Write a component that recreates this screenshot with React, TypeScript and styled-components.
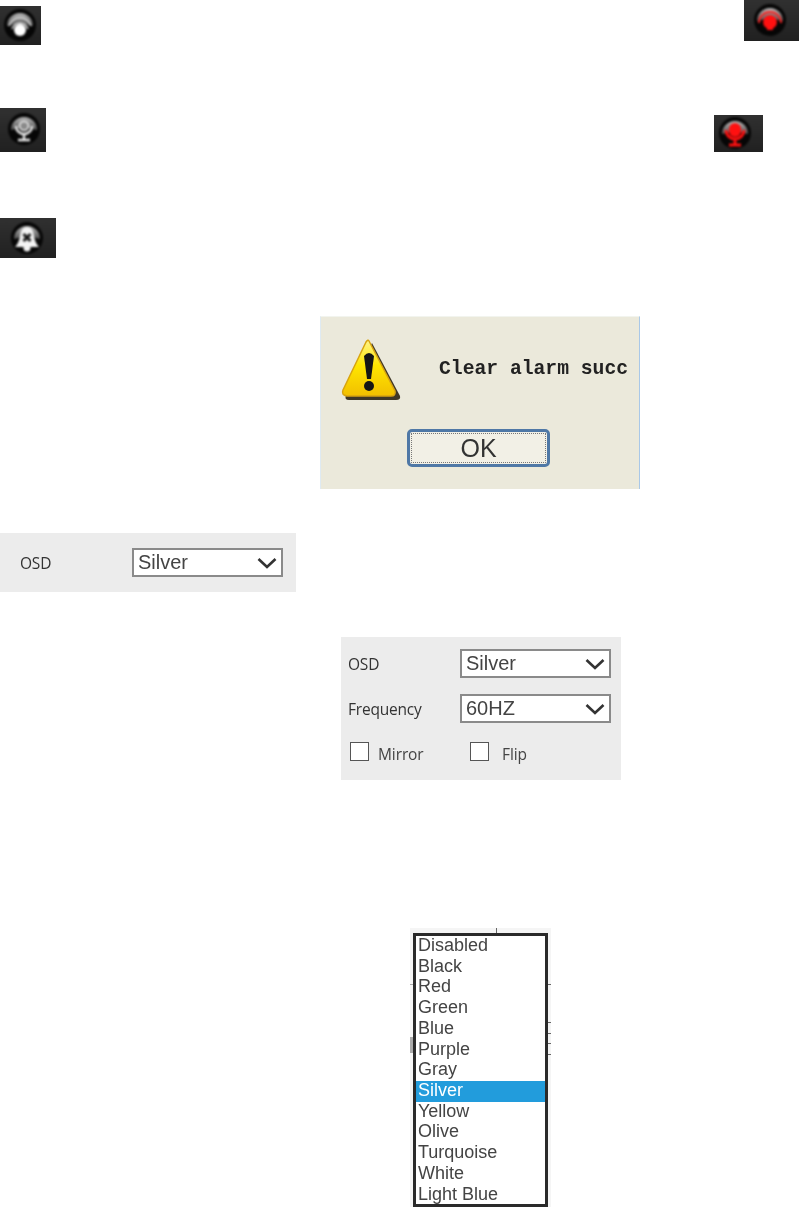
import React from 'react';
import styled, {createGlobalStyle} from 'styled-components';

const GlobalStyle = createGlobalStyle`
  html, body {
    margin: 0;
    padding: 0;
    background: #fff;
  }
`;

const Page = styled.div`
  width: 799px;
  height: 1207px;
  overflow: hidden;
  display: flex;
  flex-direction: column;
  background: #fff;
`;

const IconRow = styled.div<{$top: number; $height: number; $inset?: number}>`
  display: flex;
  justify-content: space-between;
  align-items: flex-start;
  flex-shrink: 0;
  height: ${p => p.$height}px;
  margin-top: ${p => p.$top}px;
  padding-right: ${p => p.$inset || 0}px;
`;

const IconClip = styled.div<{$top?: number}>`
  margin-top: ${p => p.$top || 0}px;
  overflow: hidden;
  line-height: 0;
`;

const IconSvg = styled.svg`
  display: block;
  overflow: visible;
  filter: blur(0.8px);
`;

const Dialog = styled.div`
  box-sizing: border-box;
  flex-shrink: 0;
  width: 320px;
  height: 173px;
  margin: 58px 0 0 320px;
  padding: 22px 0 0 20px;
  background: #ebe9db;
  border-top: 1px solid #f2f4ee;
  border-right: 1px solid #a9c8e8;
  border-left: 1px solid #dfeaf2;
  filter: blur(0.5px);
`;

const DialogBody = styled.div`
  display: flex;
  align-items: flex-start;
`;

const DialogText = styled.div`
  margin: 18px 0 0 38px;
  font-family: 'Liberation Mono', monospace;
  font-size: 19.7px;
  font-weight: 700;
  line-height: 24px;
  color: #222;
  white-space: nowrap;
`;

const OkButton = styled.div`
  box-sizing: border-box;
  width: 143px;
  height: 38px;
  margin: 26px 0 0 66px;
  padding-top: 1px;
  display: flex;
  align-items: center;
  justify-content: center;
  border: 3px solid #4f78a6;
  border-radius: 5px;
  outline: 1px dotted #777;
  outline-offset: -5px;
  background: #f2f0e6;
  font-family: 'Liberation Sans', sans-serif;
  font-size: 25px;
  color: #333;
`;

const SinglePanel = styled.div`
  box-sizing: border-box;
  flex-shrink: 0;
  width: 296px;
  height: 59px;
  margin-top: 44px;
  padding: 15px 0 0 20px;
  display: flex;
  align-items: flex-start;
  background: #ececec;
  filter: blur(0.5px);
`;

const SettingsPanel = styled.div`
  box-sizing: border-box;
  flex-shrink: 0;
  width: 280px;
  height: 143px;
  margin: 45px 0 0 341px;
  padding: 12px 0 0 7px;
  display: flex;
  flex-direction: column;
  gap: 16px;
  background: #ececec;
  filter: blur(0.5px);
`;

const FieldRow = styled.div`
  display: flex;
  align-items: flex-start;
`;

const FieldLabel = styled.div<{$width: number}>`
  width: ${p => p.$width}px;
  font-family: 'Open Sans', sans-serif;
  font-size: 15.5px;
  letter-spacing: -0.2px;
  line-height: 31px;
  height: 29px;
  color: #333;
`;

const Select = styled.div`
  box-sizing: border-box;
  width: 151px;
  height: 29px;
  padding: 0 4px 0 4px;
  display: flex;
  align-items: center;
  justify-content: space-between;
  background: #fff;
  border: 2px solid #8a8a8a;
  font-family: 'Liberation Sans', sans-serif;
  font-size: 20px;
  color: #444;
`;

const CheckRow = styled.div`
  display: flex;
  align-items: flex-start;
  margin: 3px 0 0 2px;
`;

const CheckBox = styled.span<{$gap: number}>`
  box-sizing: border-box;
  width: 19px;
  height: 19px;
  margin-right: ${p => p.$gap}px;
  background: #fff;
  border: 1px solid #555;
`;

const CheckLabel = styled.span<{$width: number}>`
  width: ${p => p.$width}px;
  margin-top: 3px;
  font-family: 'Open Sans', sans-serif;
  font-size: 15.5px;
  line-height: 19px;
  letter-spacing: -0.1px;
  color: #444;
`;

const ListShot = styled.div`
  position: relative;
  box-sizing: border-box;
  flex-shrink: 0;
  width: 141px;
  height: 279px;
  margin: 148px 0 0 410px;
  padding: 5px 3px 0;
  background: #f5f5f5;
  filter: blur(0.4px);
`;

const Tick = styled.span<{$x: number; $y: number; $w: number; $h: number; $light?: boolean}>`
  position: absolute;
  left: ${p => p.$x}px;
  top: ${p => p.$y}px;
  width: ${p => p.$w}px;
  height: ${p => p.$h}px;
  background: ${p => (p.$light ? '#aaa' : '#666')};
`;

const ColorList = styled.ul`
  box-sizing: border-box;
  width: 135px;
  height: 274px;
  margin: 0;
  padding: 0;
  overflow: hidden;
  list-style: none;
  background: #fff;
  border: 3px solid #2a2a2a;
`;

const ColorItem = styled.li<{$active?: boolean}>`
  height: 20.72px;
  padding-left: 2px;
  font-family: 'Liberation Sans', sans-serif;
  font-size: 18px;
  line-height: 19px;
  color: ${p => (p.$active ? '#fff' : '#444')};
  background: ${p => (p.$active ? '#229cdc' : 'transparent')};
`;

const colors = [
  'Disabled',
  'Black',
  'Red',
  'Green',
  'Blue',
  'Purple',
  'Gray',
  'Silver',
  'Yellow',
  'Olive',
  'Turquoise',
  'White',
  'Light Blue',
];

type BadgeProps = {
  id: string;
  w: number;
  h: number;
  cx: number;
  cy: number;
  top?: number;
  children: React.ReactNode;
};

// dark square button with the round black knob and a grey dome on top
const Badge = ({id, w, h, cx, cy, top, children}: BadgeProps) => (
  <IconClip $top={top}>
    <IconSvg width={w} height={h} viewBox={`0 0 ${w} ${h}`}>
      <defs>
        <linearGradient id={`${id}-bg`} x1="0" y1="0" x2="0" y2="1">
          <stop offset="0" stopColor="#333" />
          <stop offset="1" stopColor="#1e1e1e" />
        </linearGradient>
        <linearGradient id={`${id}-dome`} x1="0" y1="0" x2="0" y2="1">
          <stop offset="0" stopColor="#b8b8b8" />
          <stop offset="1" stopColor="#505050" />
        </linearGradient>
      </defs>
      <rect x="-6" y="-6" width={w + 12} height={h + 12} fill={`url(#${id}-bg)`} />
      <circle cx={cx} cy={cy} r={16} fill="#060606" />
      <path
        d={`M${cx - 13} ${cy + 1}A13 13 0 0 1 ${cx + 13} ${cy + 1}Q${cx} ${cy - 3} ${cx - 13} ${cy + 1}Z`}
        fill={`url(#${id}-dome)`}
      />
      {children}
    </IconSvg>
  </IconClip>
);

const Chevron = () => (
  <svg width="20" height="12" viewBox="0 0 20 12">
    <path d="M1.5 2L10 10L18.5 2" fill="none" stroke="#333" strokeWidth="2.6" />
  </svg>
);

const WarningIcon = () => (
  <svg width="60" height="64" viewBox="0 0 60 64">
    <defs>
      <linearGradient id="warn" x1="0" y1="0" x2="0" y2="1">
        <stop offset="0" stopColor="#fff48a" />
        <stop offset="0.45" stopColor="#ffe600" />
        <stop offset="1" stopColor="#f2bf00" />
      </linearGradient>
    </defs>
    <path d="M31 4L59 57Q60 61 55 61H8Q3 61 5 56Z" fill="#3e3626" />
    <path d="M28 2L54 52Q55 57 50 57H6Q0 56 2 51L25 3Q27 0 28 2Z" fill="url(#warn)" stroke="#d8a410" strokeWidth="1.5" />
    <path d="M23 17Q28 11 33 17L30 40H26Z" fill="#151515" />
    <circle cx="28" cy="47" r="5" fill="#151515" />
  </svg>
);

const App = () => (
  <Page>
    <GlobalStyle />
    <IconRow $top={0} $height={45}>
      <Badge id="a" w={41} h={39} cx={20} cy={19} top={6}>
        <path d="M9 20A11.5 11.5 0 0 1 31 20" fill="none" stroke="#d8d8d8" strokeWidth="1.5" />
        <path d="M12 23A8.5 8.5 0 0 1 28 23" fill="none" stroke="#e4e4e4" strokeWidth="1.5" />
        <circle cx="20" cy="24" r="6" fill="#fff" />
      </Badge>
      <Badge id="b" w={55} h={41} cx={26} cy={20}>
        <path d="M15 23A11 11 0 0 1 37 23" fill="none" stroke="#ff2020" strokeWidth="1.8" />
        <circle cx="26" cy="22" r="7" fill="#ff1010" />
        <rect x="23" y="27" width="6" height="3" fill="#ff1010" />
      </Badge>
    </IconRow>
    <IconRow $top={63} $height={44} $inset={36}>
      <Badge id="c" w={46} h={44} cx={24} cy={21}>
        <circle cx="24" cy="18" r="4.5" fill="#8a8a8a" stroke="#efefef" strokeWidth="1.6" />
        <path d="M16 18A8 8 0 0 0 32 18M24 26V31M18 32H30" fill="none" stroke="#ececec" strokeWidth="2.4" />
      </Badge>
      <Badge id="d" w={49} h={37} cx={21} cy={18} top={7}>
        <rect x="15" y="8" width="12" height="14" rx="6" fill="#ff1010" />
        <path d="M12 15A9 9 0 0 0 30 15M21 24V29M15 30H27" fill="none" stroke="#ff1010" strokeWidth="3" />
      </Badge>
    </IconRow>
    <IconRow $top={66} $height={40}>
      <Badge id="e" w={56} h={40} cx={27} cy={20}>
        <path d="M27 9Q33 9 34 18Q35 25 39 29H15Q19 25 20 18Q21 9 27 9Z" fill="#f4f4f4" />
        <circle cx="27" cy="30" r="3.5" fill="#f4f4f4" />
        <path d="M23.5 16L30.5 23M30.5 16L23.5 23" stroke="#151515" strokeWidth="3" />
      </Badge>
    </IconRow>
    <Dialog>
      <DialogBody>
        <WarningIcon />
        <DialogText>Clear alarm succ</DialogText>
      </DialogBody>
      <OkButton>OK</OkButton>
    </Dialog>
    <SinglePanel>
      <FieldLabel $width={112}>OSD</FieldLabel>
      <Select>
        Silver
        <Chevron />
      </Select>
    </SinglePanel>
    <SettingsPanel>
      <FieldRow>
        <FieldLabel $width={112}>OSD</FieldLabel>
        <Select>
          Silver
          <Chevron />
        </Select>
      </FieldRow>
      <FieldRow>
        <FieldLabel $width={112}>Frequency</FieldLabel>
        <Select>
          60HZ
          <Chevron />
        </Select>
      </FieldRow>
      <CheckRow>
        <CheckBox $gap={9} />
        <CheckLabel $width={92}>Mirror</CheckLabel>
        <CheckBox $gap={13} />
        <CheckLabel $width={40}>Flip</CheckLabel>
      </CheckRow>
    </SettingsPanel>
    <ListShot>
      <Tick $x={86} $y={0} $w={1} $h={5} />
      <Tick $x={0} $y={109} $w={3} $h={16} $light />
      <Tick $x={0} $y={56} $w={3} $h={1} $light />
      <Tick $x={138} $y={56} $w={3} $h={1} />
      <Tick $x={138} $y={94} $w={3} $h={1} />
      <Tick $x={138} $y={105} $w={3} $h={1} />
      <Tick $x={138} $y={115} $w={3} $h={1} />
      <Tick $x={138} $y={126} $w={3} $h={1} />
      <ColorList>
        {colors.map(color => (
          <ColorItem key={color} $active={color === 'Silver'}>
            {color}
          </ColorItem>
        ))}
      </ColorList>
    </ListShot>
  </Page>
);

export default App;
